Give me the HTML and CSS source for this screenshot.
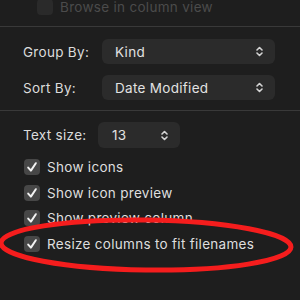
FILE: index.html
```html
<!DOCTYPE html>
<html>
<head>
<meta charset="utf-8">
<link rel="stylesheet" href="styles.css">
</head>
<body>
<div class="panel">
  <div class="toprow">
    <span class="cb cb-dim"></span>
    <span class="dimtext">Browse in column view</span>
  </div>
  <div class="sep"></div>
  <div class="section">
    <div class="field">
      <span class="label">Group By:</span>
      <div class="popup wide"><span>Kind</span>
        <svg class="arrows" width="7" height="11" viewBox="0 0 7 11"><path d="M1 4 L3.5 1.5 L6 4 M1 7 L3.5 9.5 L6 7" fill="none" stroke="#d4d4d4" stroke-width="1.6" stroke-linecap="round" stroke-linejoin="round"/></svg>
      </div>
    </div>
    <div class="field">
      <span class="label">Sort By:</span>
      <div class="popup wide"><span>Date Modified</span>
        <svg class="arrows" width="7" height="11" viewBox="0 0 7 11"><path d="M1 4 L3.5 1.5 L6 4 M1 7 L3.5 9.5 L6 7" fill="none" stroke="#d4d4d4" stroke-width="1.6" stroke-linecap="round" stroke-linejoin="round"/></svg>
      </div>
    </div>
  </div>
  <div class="sep"></div>
  <div class="section2">
    <div class="field">
      <span class="label label-ts">Text size:</span>
      <div class="popup narrow"><span>13</span>
        <svg class="arrows" width="7" height="11" viewBox="0 0 7 11"><path d="M1 4 L3.5 1.5 L6 4 M1 7 L3.5 9.5 L6 7" fill="none" stroke="#d4d4d4" stroke-width="1.6" stroke-linecap="round" stroke-linejoin="round"/></svg>
      </div>
    </div>
    <div class="checks">
      <div class="check"><span class="cb"><svg width="16" height="16" viewBox="0 0 16 16"><path d="M4.2 8.6 L6.9 11.6 L11.8 4.2" fill="none" stroke="#f2f2f2" stroke-width="2" stroke-linecap="round" stroke-linejoin="round"/></svg></span><span class="ctext">Show icons</span></div>
      <div class="check"><span class="cb"><svg width="16" height="16" viewBox="0 0 16 16"><path d="M4.2 8.6 L6.9 11.6 L11.8 4.2" fill="none" stroke="#f2f2f2" stroke-width="2" stroke-linecap="round" stroke-linejoin="round"/></svg></span><span class="ctext">Show icon preview</span></div>
      <div class="check"><span class="cb"><svg width="16" height="16" viewBox="0 0 16 16"><path d="M4.2 8.6 L6.9 11.6 L11.8 4.2" fill="none" stroke="#f2f2f2" stroke-width="2" stroke-linecap="round" stroke-linejoin="round"/></svg></span><span class="ctext">Show preview column</span></div>
      <div class="check"><span class="cb"><svg width="16" height="16" viewBox="0 0 16 16"><path d="M4.2 8.6 L6.9 11.6 L11.8 4.2" fill="none" stroke="#f2f2f2" stroke-width="2" stroke-linecap="round" stroke-linejoin="round"/></svg></span><span class="ctext">Resize columns to fit filenames</span></div>
    </div>
  </div>
</div>
<svg class="circle" width="300" height="300" viewBox="0 0 300 300">
  <ellipse cx="146" cy="245" rx="145" ry="25" fill="none" stroke="#f51d1d" stroke-width="5" transform="rotate(0.8 146 245)"/>
</svg>
</body>
</html>
```
FILE: styles.css
```css
html, body {
  margin: 0;
  padding: 0;
  background: #1e1e1e;
  width: 300px;
  height: 300px;
  overflow: hidden;
}
body {
  position: relative;
  font-family: Inter, "Liberation Sans", sans-serif;
  font-size: 13.5px;
  letter-spacing: 0.3px;
  color: #dcdcdc;
}
.panel {
  display: flex;
  flex-direction: column;
}
.toprow {
  display: flex;
  align-items: center;
  gap: 7px;
  height: 16px;
  margin-top: -1px;
  padding-left: 37px;
  margin-bottom: 11px;
}
.dimtext {
  color: #4b4b4b;
}
.sep {
  height: 1px;
  background: #393939;
}
.section {
  display: flex;
  flex-direction: column;
  gap: 11px;
  padding: 12px 0 10px 23px;
}
.section2 {
  display: flex;
  flex-direction: column;
  padding: 11px 0 0 23px;
}
.field {
  display: flex;
  align-items: center;
}
.label {
  width: 79px;
}
.label-ts {
  width: 75px;
}
.popup {
  display: flex;
  align-items: center;
  justify-content: space-between;
  height: 25px;
  background: #2b2b2b;
  border-radius: 6px;
  box-sizing: border-box;
  padding: 0 12px 0 13px;
  color: #e2e2e2;
}
.wide {
  width: 173px;
}
.narrow {
  width: 82px;
  height: 26px;
  padding-left: 14px;
}
.checks {
  display: flex;
  flex-direction: column;
  gap: 9.5px;
  margin-top: 11px;
}
.check {
  display: flex;
  align-items: center;
  gap: 7px;
  height: 16px;
  padding-left: 1px;
}
.cb {
  width: 16px;
  height: 16px;
  border-radius: 4px;
  background: #474747;
  display: flex;
  flex: none;
}
.cb-dim {
  background: #2a2a2a;
}
.ctext {
  color: #dedede;
}
.circle {
  position: absolute;
  left: 0;
  top: 0;
  pointer-events: none;
  filter: blur(0.4px);
}
```
